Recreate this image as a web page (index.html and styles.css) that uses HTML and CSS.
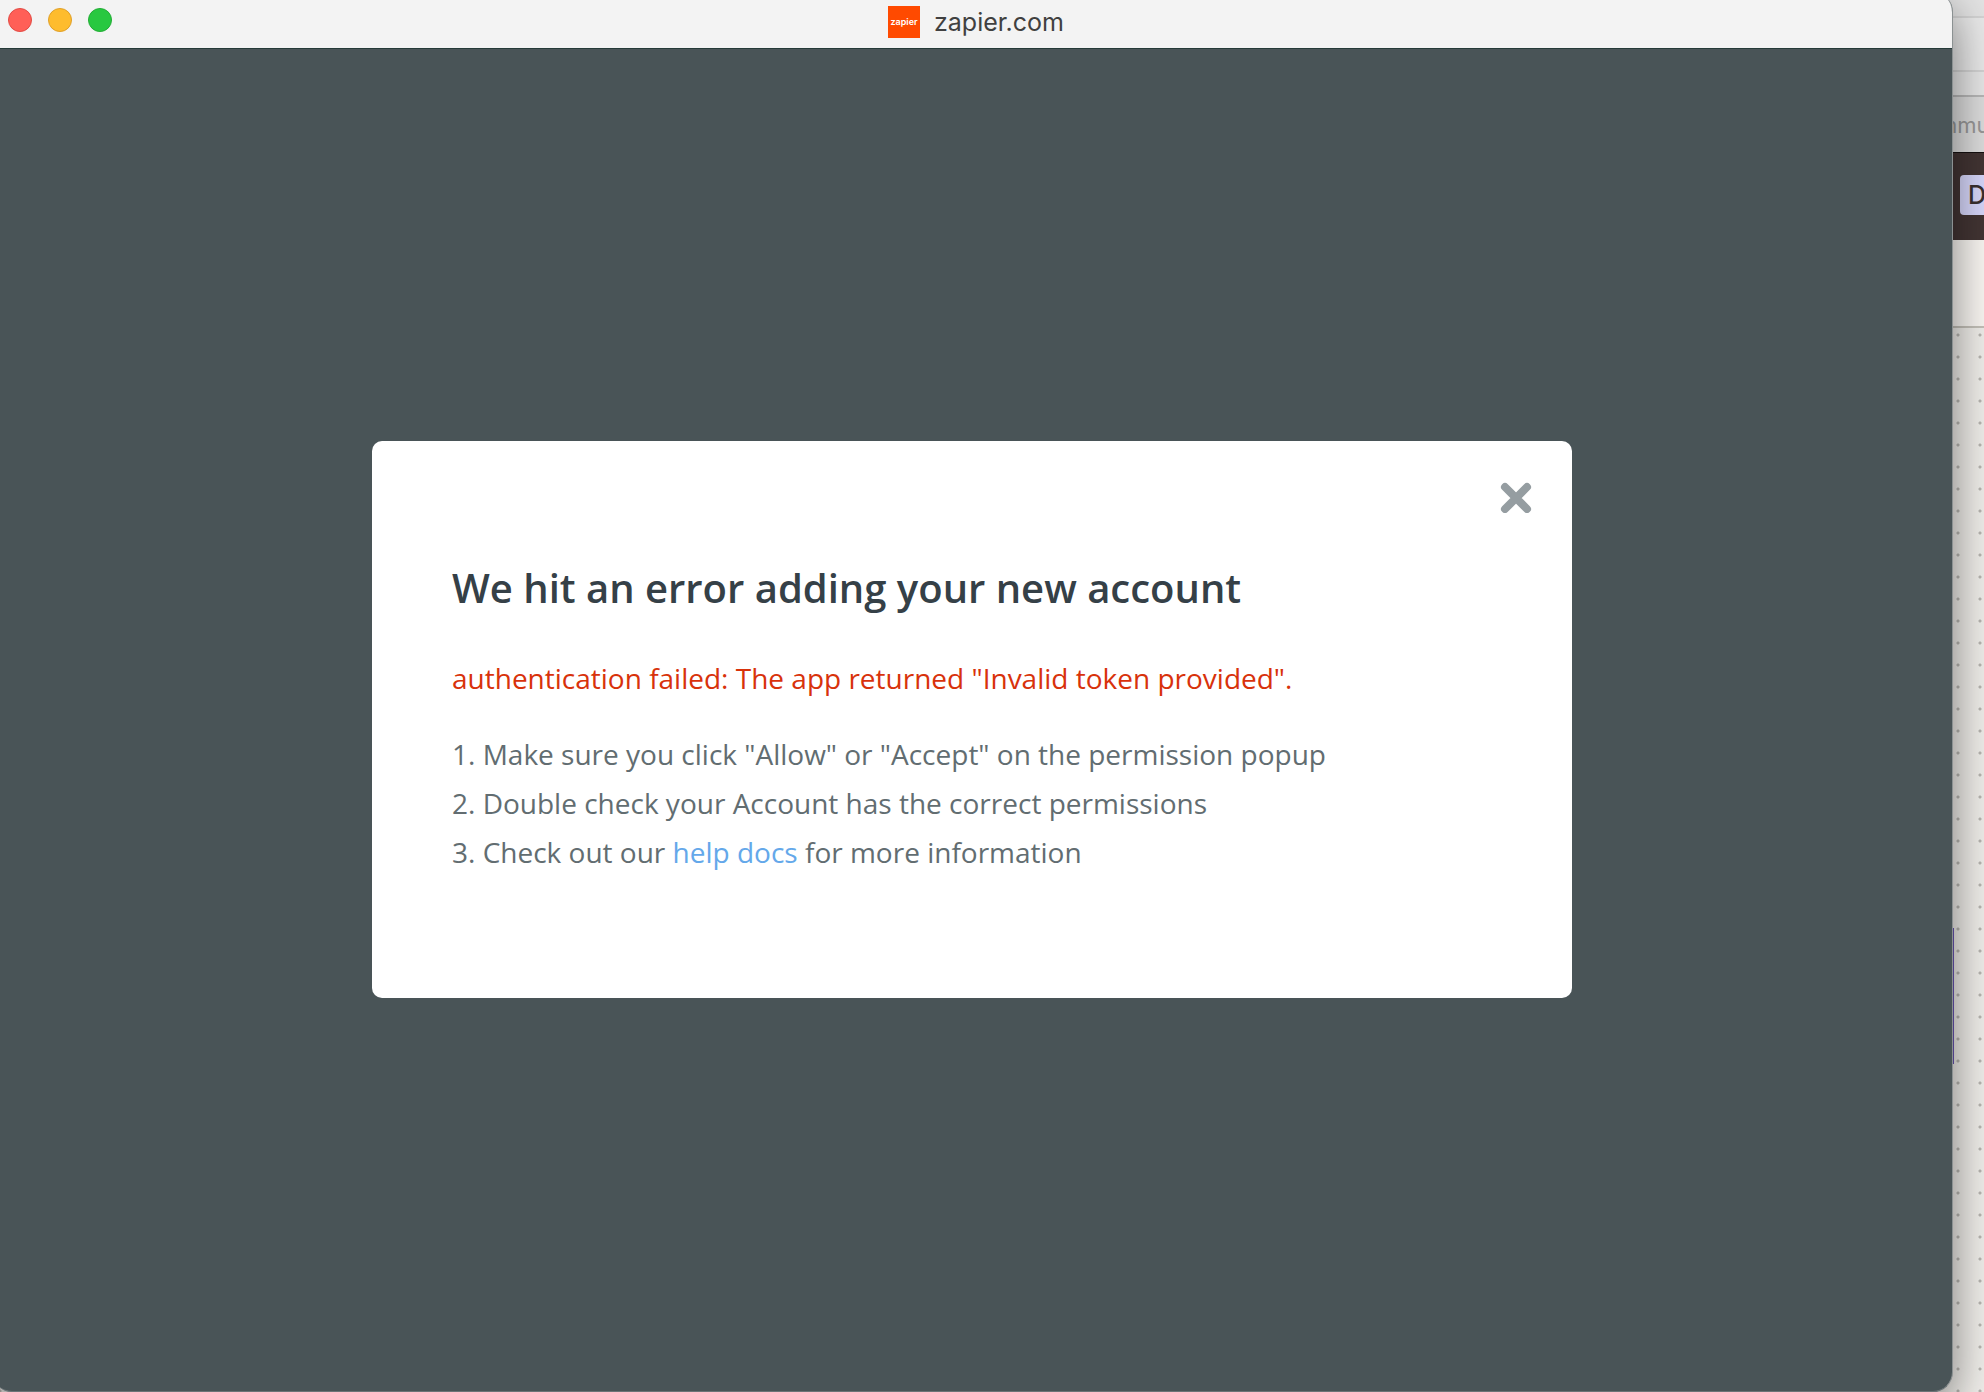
FILE: index.html
```html
<!DOCTYPE html>
<html lang="en">
<head>
    <meta charset="UTF-8">
    <meta name="viewport" content="width=device-width, initial-scale=1.0">
    <title>zapier.com</title>
    <link rel="stylesheet" href="styles.css">
</head>
<body>
    <!-- browser behind the popup -->
    <div class="behind">
        <div class="behind-top"></div>
        <div class="behind-tools"></div>
        <div class="behind-address"></div>
        <div class="behind-bookmarks"><span>mmu</span></div>
        <div class="behind-nav"><span class="behind-chip">D</span></div>
        <div class="behind-bar"></div>
        <div class="behind-canvas"></div>
        <div class="behind-node"></div>
    </div>

    <div class="window">
        <header class="titlebar">
            <div class="lights">
                <button class="light red" aria-label="Close window"></button>
                <button class="light yellow" aria-label="Minimize window"></button>
                <button class="light green" aria-label="Zoom window"></button>
            </div>
            <div class="title">
                <span class="logo">zapier</span>
                <span>zapier.com</span>
            </div>
        </header>
        <main class="content">
            <section class="modal">
                <button class="close" aria-label="Close">
                    <svg viewBox="0 0 32 32" width="32" height="32">
                        <path d="M5 6L27 28M27 6L5 28" fill="none" stroke="currentColor" stroke-width="8" stroke-linecap="round"/>
                    </svg>
                </button>
                <h1>We hit an error adding your new account</h1>
                <p class="error">authentication failed: The app returned "Invalid token provided".</p>
                <ol class="steps">
                    <li>Make sure you click "Allow" or "Accept" on the permission popup</li>
                    <li>Double check your Account has the correct permissions</li>
                    <li>Check out our <a href="#">help docs</a> for more information</li>
                </ol>
            </section>
        </main>
    </div>
</body>
</html>
```
FILE: styles.css
```css
*{margin:0; padding:0; box-sizing:border-box}
body{position:relative; height:100vh; overflow:hidden; display:flex; background:#e6e4e0; font-family:"Open Sans", sans-serif}
button{border:0; background:none; display:block}

/* popup window, its left and top edges run off the screen */
.window{position:relative; flex:1; margin:-8px 31px 0 -8px; display:flex; flex-direction:column; overflow:hidden; background:#495457; border-right:1px solid #8b9192; border-bottom:1px solid #6b7477; border-radius:20px; box-shadow:0 16px 48px rgba(0,0,0,.5)}
.titlebar{display:grid; grid-template-columns:1fr auto 1fr; align-items:center; height:57px; padding:8px 16px 5px; background:#f3f3f3; border-bottom:1px solid #263a39}
.lights{display:flex; gap:16px; padding-bottom:3px}
.light{width:24px; height:24px; border-radius:50%; border:1px solid}
.red{background:#ff5f57; border-color:#e24b44}
.yellow{background:#febc2e; border-color:#e0a029}
.green{background:#28c840; border-color:#22ad35}
.title{display:flex; align-items:center; gap:14px; padding-left:8px; color:#404040; font:25px/32px Inter, sans-serif}
.logo{width:32px; height:32px; background:#ff4a00; color:#fff; font-size:9px; font-weight:600; text-align:center}

.content{flex:1; display:flex; align-items:center; justify-content:center; padding-bottom:2px}
.modal{width:1200px; max-width:100%; padding:40px 80px 121px; background:#fff; border-radius:10px}
.close{width:32px; height:32px; margin:0 -40px 51px auto; color:#959da1}
.close svg{display:block}
h1{margin-bottom:42px; color:#354047; font-size:40px; line-height:48px; font-weight:600}
.error{margin-bottom:27px; color:#d8320b; font-size:28px; line-height:49px}
.steps{list-style-position:inside; list-style-type:decimal; color:#626d71; font-size:28px; line-height:49px}
.steps a{color:#64a8ea; text-decoration:none}

.behind{position:absolute; inset:0; display:flex; flex-direction:column}
.behind > div{border-bottom:2px solid #d4d4d4}
.behind-top{height:18px; background:#e4e4e4}
.behind-tools{height:54px; background:#eaeaea}
.behind-address{height:25px; background:#e8e8e8}
.behind > .behind-address{border-color:#b8b8b8}
.behind-bookmarks{display:flex; justify-content:flex-end; height:56px; background:#dedede; color:#999; font:22px/56px Inter, sans-serif}
.behind-bookmarks span{width:46px}
.behind > .behind-bookmarks{border-bottom:1px solid #151010}
.behind-nav{display:flex; justify-content:flex-end; align-items:flex-start; height:87px; padding-top:22px; background:#433534}
.behind > .behind-nav{border:0}
.behind-chip{width:24px; height:40px; padding-left:8px; background:#d8d8fc; border-radius:4px 0 0 4px; color:#3a302f; font:500 25px/40px Inter, sans-serif}
.behind-bar{height:88px; background:#fbf8f4}
.behind > .behind-bar{border-color:#c5c2ba}
.behind-canvas{flex:1; background:#f2f0ec radial-gradient(circle, #b9b7b2 1px, transparent 2px) 1947px -4px / 22px 22px}
.behind > .behind-canvas{border:0}
/* edge of the selected step showing next to the popup */
.behind > .behind-node{position:absolute; top:928px; right:30px; width:12px; height:136px; background:#6a55b5; border:0}
```
